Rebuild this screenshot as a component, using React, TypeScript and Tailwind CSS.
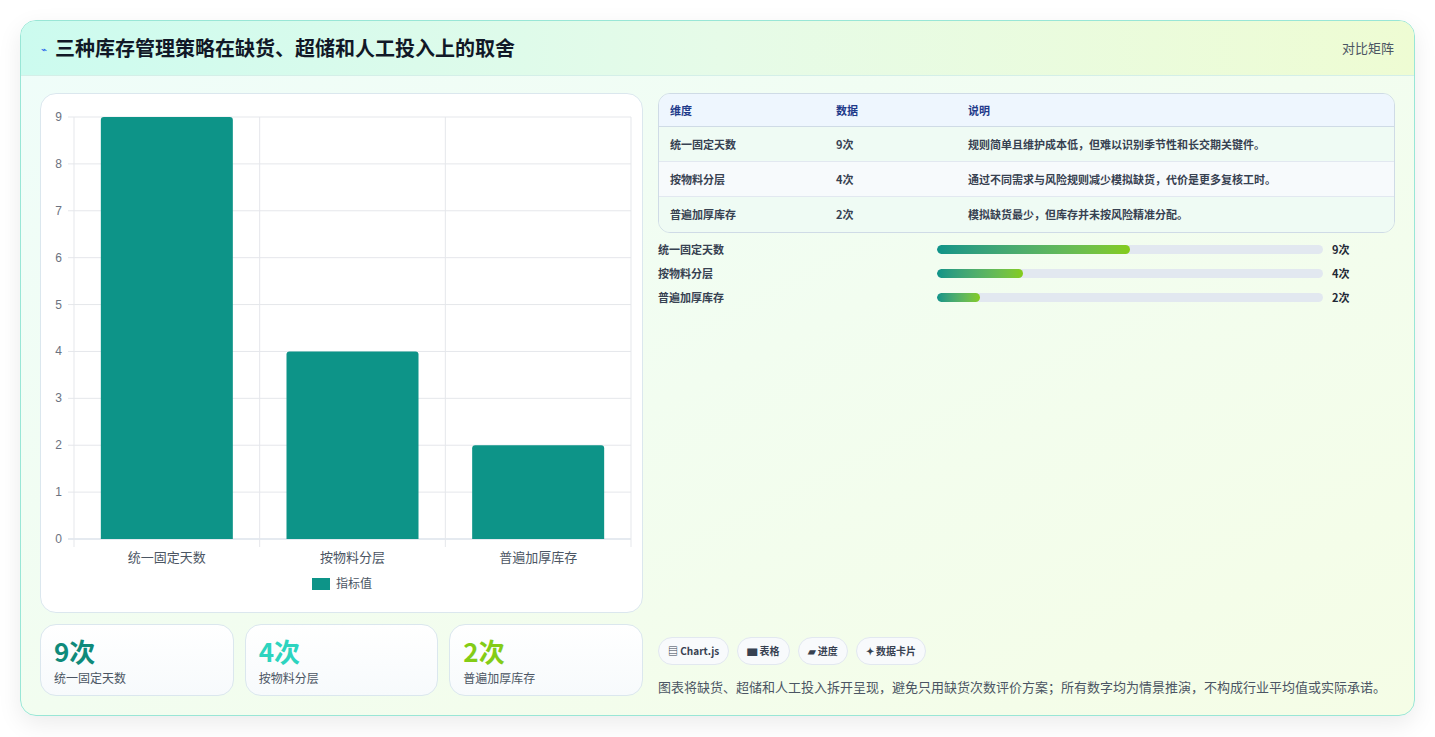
import React from "react";

const rows = [
  { n: "统一固定天数", v: 9, d: "规则简单且维护成本低，但难以识别季节性和长交期关键件。" },
  { n: "按物料分层", v: 4, d: "通过不同需求与风险规则减少模拟缺货，代价是更多复核工时。" },
  { n: "普遍加厚库存", v: 2, d: "模拟缺货最少，但库存并未按风险精准分配。" },
];

function Chart() {
  // coords relative to card (40,93)
  const x0 = 33, x1 = 590, yTop = 23, yBot = 445;
  const unit = (yBot - yTop) / 9;
  const col = (x1 - x0) / 3;
  return (
    <svg width="602" height="519" className="block">
      {Array.from({ length: 10 }).map((_, i) => {
        const y = yBot - i * unit;
        return (
          <g key={i}>
            <line x1={x0 - 6} x2={x1} y1={y} y2={y} stroke={i === 0 ? "#cbd5e1" : "#e5e7eb"} />
            <text x={x0 - 12} y={y + 4} fontSize="12" fill="#6b7280" textAnchor="end" fontFamily="Liberation Sans, sans-serif">{i}</text>
          </g>
        );
      })}
      {[0, 1, 2, 3].map((i) => (
        <line key={i} x1={x0 + i * col} x2={x0 + i * col} y1={yTop} y2={yBot + 8} stroke="#e5e7eb" />
      ))}
      {rows.map((r, i) => {
        const h = r.v * unit;
        const cx = x0 + col * i + col / 2;
        return (
          <g key={i}>
            <path d={`M${cx - 66} ${yBot} V${yBot - h + 3} Q${cx - 66} ${yBot - h} ${cx - 63} ${yBot - h} H${cx + 63} Q${cx + 66} ${yBot - h} ${cx + 66} ${yBot - h + 3} V${yBot} Z`} fill="#0d9488" />
            <text x={cx} y={468} fontSize="13" fill="#4b5563" textAnchor="middle" fontFamily="Noto Sans CJK SC, sans-serif">{r.n}</text>
          </g>
        );
      })}
      <rect x="271" y="484" width="18" height="12" fill="#0d9488" />
      <text x="295" y="494" fontSize="12" fill="#4b5563" fontFamily="Noto Sans CJK SC, sans-serif">指标值</text>
    </svg>
  );
}

export default function App() {
  const colors = ["text-[#0f8a7a]", "text-[#2dd4bf]", "text-[#84cc16]"];
  return (
    <div className="w-[1435px] h-[737px] bg-white p-5 pb-0" style={{ fontFamily: "'Noto Sans CJK SC', 'Noto Sans', sans-serif" }}>
      <div className="h-[696px] rounded-2xl border border-[#99e6d6] overflow-hidden flex flex-col shadow-[0_8px_24px_rgba(0,0,0,0.08)] bg-gradient-to-br from-[#effdfa] to-[#f5fde6]">
        <div className="h-[55px] shrink-0 flex items-center justify-between px-5 bg-gradient-to-r from-[#ccfbef] via-[#e6fbe8] to-[#eefcd3] border-b border-[#d4efe8]">
          <div className="flex items-center gap-2">
            <span className="text-[#2563eb] text-[10px]">⌁</span>
            <span className="text-[20px] font-bold text-[#111827]">三种库存管理策略在缺货、超储和人工投入上的取舍</span>
          </div>
          <span className="text-[13px] text-[#4b5563]">对比矩阵</span>
        </div>
        <div className="flex-1 flex gap-[15px] pl-[19px] pr-[19px] pt-[17px] pb-[19px]">
          <div className="w-[603px] flex flex-col gap-[11px]">
            <div className="h-[520px] rounded-2xl border border-[#dbe7ee] bg-white"><Chart /></div>
            <div className="flex gap-[11px] flex-1">
              {rows.map((r, i) => (
                <div key={i} className="flex-1 rounded-2xl border border-[#dbe7ee] bg-gradient-to-b from-white to-[#f7fafc] px-[13px] pt-[10px]">
                  <div className={`text-[26px] font-bold leading-[32px] ${colors[i]}`}>{r.v}次</div>
                  <div className="text-[12px] text-[#4b5563] mt-[2px]">{r.n}</div>
                </div>
              ))}
            </div>
          </div>
          <div className="flex-1 flex flex-col">
            <div className="rounded-xl border border-[#cfdbe6] overflow-hidden text-[11px] font-semibold">
              <div className="flex h-[33px] items-center bg-[#eef6fe] text-[#1e3a8a] border-b border-[#cfdbe6]">
                <div className="w-[177px] pl-[11px]">维度</div><div className="w-[132px]">数据</div><div>说明</div>
              </div>
              {rows.map((r, i) => (
                <div key={i} className={`flex h-[35px] items-center text-[#374151] ${i === 1 ? "bg-[#f7fafc]" : "bg-[#effbf4]"} ${i < 2 ? "border-b border-[#e2e8f0]" : ""}`}>
                  <div className="w-[177px] pl-[11px]">{r.n}</div><div className="w-[132px]">{r.v}次</div><div>{r.d}</div>
                </div>
              ))}
            </div>
            <div className="mt-[9px] flex flex-col gap-[9px] text-[11px] font-semibold text-[#374151]">
              {rows.map((r, i) => (
                <div key={i} className="flex items-center h-[15px]">
                  <div className="w-[279px]">{r.n}</div>
                  <div className="w-[386px] h-[9px] rounded-full bg-[#e2e8f0] overflow-hidden">
                    <div className="h-full rounded-full bg-gradient-to-r from-[#0d9488] to-[#84cc16]" style={{ width: `${(r.v / 18) * 100}%` }} />
                  </div>
                  <div className="ml-[9px] text-[#1f2937]">{r.v}次</div>
                </div>
              ))}
            </div>
            <div className="flex-1" />
            <div className="flex gap-[8px] text-[10px] font-semibold text-[#374151]">
              {["▤ Chart.js", "▆ 表格", "▰ 进度", "✦ 数据卡片"].map((t) => (
                <span key={t} className="h-[28px] px-[9px] flex items-center rounded-full border border-[#e2e8f0] bg-[#f8fafc]">{t}</span>
              ))}
            </div>
            <div className="mt-[12px] text-[13px] text-[#4b5563]">图表将缺货、超储和人工投入拆开呈现，避免只用缺货次数评价方案；所有数字均为情景推演，不构成行业平均值或实际承诺。</div>
          </div>
        </div>
      </div>
    </div>
  );
}
